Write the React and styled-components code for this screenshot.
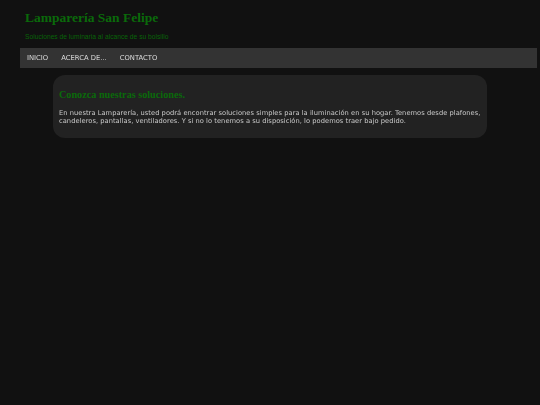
import React from 'react';
import styled, {createGlobalStyle} from 'styled-components';

const GlobalStyle = createGlobalStyle`
  html, body {
    margin: 0;
    padding: 0;
    background-color: #111111;
    min-height: 100%;
  }
  body {
    font-family: "DejaVu Sans", Verdana, sans-serif;
  }
`;

const Page = styled.div`
  min-height: 405px;
  background-color: #111111;
  padding: 0 3px 0 20px;
  box-sizing: border-box;
`;

const Header = styled.header`
  padding: 10px 0 0 5px;
  height: 39px;
  box-sizing: border-box;
`;

const Title = styled.h1`
  margin: 0;
  font-family: "Liberation Serif", "Times New Roman", serif;
  font-weight: bold;
  font-size: 13.5px;
  line-height: 15px;
  color: #0a6a0a;
`;

const Subtitle = styled.div`
  margin-top: 8px;
  font-family: "Liberation Sans", Arial, sans-serif;
  font-size: 6.7px;
  line-height: 8px;
  color: #086408;
`;

const Nav = styled.nav`
  display: flex;
  align-items: center;
  height: 20px;
  margin-top: 9px;
  padding-left: 7px;
  gap: 13px;
  background-color: #333333;
`;

const NavItem = styled.a`
  font-size: 6.8px;
  color: #dcdcdc;
  text-decoration: none;
  cursor: pointer;
  filter: grayscale(1);
  &:hover {
    color: #ffffff;
  }
`;

const Main = styled.main`
  padding: 7px 0 0 33px;
`;

const Card = styled.section`
  width: 434px;
  height: 63px;
  box-sizing: border-box;
  padding: 14px 0 0 6px;
  background-color: #222222;
  border-radius: 12px;
`;

const CardTitle = styled.h2`
  margin: 0;
  font-family: "Liberation Serif", "Times New Roman", serif;
  font-weight: bold;
  font-size: 10.2px;
  line-height: 12px;
  color: #0a6a0a;
`;

const CardText = styled.p`
  margin: 8px 0 0 0;
  font-size: 6.7px;
  line-height: 8px;
  letter-spacing: 0.04px;
  color: #c8c8c8;
  filter: grayscale(1);
`;

export default function App() {
    return (
        <Page>
            <GlobalStyle/>
            <Header>
                <Title>Lamparería San Felipe</Title>
                <Subtitle>Soluciones de luminaria al alcance de su bolsillo</Subtitle>
            </Header>
            <Nav>
                <NavItem>INICIO</NavItem>
                <NavItem>ACERCA DE...</NavItem>
                <NavItem>CONTACTO</NavItem>
            </Nav>
            <Main>
                <Card>
                    <CardTitle>Conozca nuestras soluciones.</CardTitle>
                    <CardText>
                        En nuestra Lamparería, usted podrá encontrar soluciones simples para la iluminación en su hogar. Tenemos desde plafones, candeleros, pantallas, ventiladores. Y si no lo tenemos a su disposición, lo podemos traer bajo pedido.
                    </CardText>
                </Card>
            </Main>
        </Page>
    );
}
